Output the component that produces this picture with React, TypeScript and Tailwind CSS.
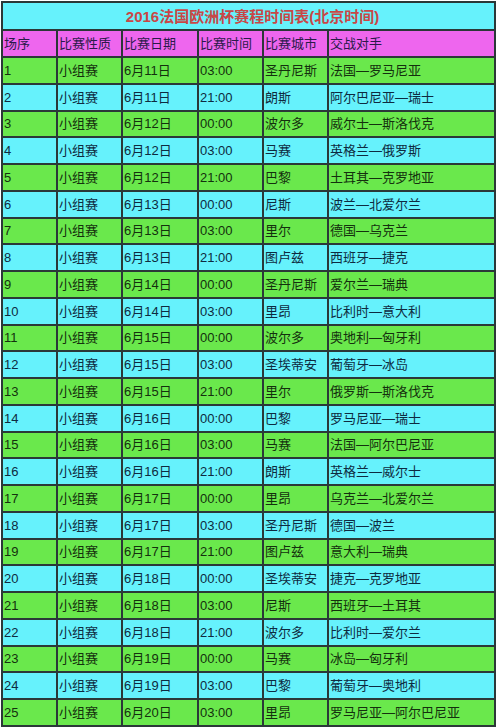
import React from "react";

const rows: string[][] = [
  ["1", "小组赛", "6月11日", "03:00", "圣丹尼斯", "法国—罗马尼亚"],
  ["2", "小组赛", "6月11日", "21:00", "朗斯", "阿尔巴尼亚—瑞士"],
  ["3", "小组赛", "6月12日", "00:00", "波尔多", "威尔士—斯洛伐克"],
  ["4", "小组赛", "6月12日", "03:00", "马赛", "英格兰—俄罗斯"],
  ["5", "小组赛", "6月12日", "21:00", "巴黎", "土耳其—克罗地亚"],
  ["6", "小组赛", "6月13日", "00:00", "尼斯", "波兰—北爱尔兰"],
  ["7", "小组赛", "6月13日", "03:00", "里尔", "德国—乌克兰"],
  ["8", "小组赛", "6月13日", "21:00", "图卢兹", "西班牙—捷克"],
  ["9", "小组赛", "6月14日", "00:00", "圣丹尼斯", "爱尔兰—瑞典"],
  ["10", "小组赛", "6月14日", "03:00", "里昂", "比利时—意大利"],
  ["11", "小组赛", "6月15日", "00:00", "波尔多", "奥地利—匈牙利"],
  ["12", "小组赛", "6月15日", "03:00", "圣埃蒂安", "葡萄牙—冰岛"],
  ["13", "小组赛", "6月15日", "21:00", "里尔", "俄罗斯—斯洛伐克"],
  ["14", "小组赛", "6月16日", "00:00", "巴黎", "罗马尼亚—瑞士"],
  ["15", "小组赛", "6月16日", "03:00", "马赛", "法国—阿尔巴尼亚"],
  ["16", "小组赛", "6月16日", "21:00", "朗斯", "英格兰—威尔士"],
  ["17", "小组赛", "6月17日", "00:00", "里昂", "乌克兰—北爱尔兰"],
  ["18", "小组赛", "6月17日", "03:00", "圣丹尼斯", "德国—波兰"],
  ["19", "小组赛", "6月17日", "21:00", "图卢兹", "意大利—瑞典"],
  ["20", "小组赛", "6月18日", "00:00", "圣埃蒂安", "捷克—克罗地亚"],
  ["21", "小组赛", "6月18日", "03:00", "尼斯", "西班牙—土耳其"],
  ["22", "小组赛", "6月18日", "21:00", "波尔多", "比利时—爱尔兰"],
  ["23", "小组赛", "6月19日", "00:00", "马赛", "冰岛—匈牙利"],
  ["24", "小组赛", "6月19日", "03:00", "巴黎", "葡萄牙—奥地利"],
  ["25", "小组赛", "6月20日", "03:00", "里昂", "罗马尼亚—阿尔巴尼亚"],
];

const headers = ["场序", "比赛性质", "比赛日期", "比赛时间", "比赛城市", "交战对手"];

export default function App() {
  return (
    <div className="w-[500px] h-[728px] overflow-hidden bg-white pt-[1px]" style={{ fontFamily: '"Liberation Sans", "Noto Sans CJK SC", sans-serif' }}>
      <div className="ml-[1px] w-[495px] grid grid-cols-[53px_63px_74px_63px_63px_165px] gap-[2px] p-[2px] bg-[#2b3838] text-[13px] text-[#1a2233] leading-none">
        <div className="col-span-6 h-[26px] bg-[#66f2fc] flex items-center justify-center pl-[8px] text-[15px] font-bold text-[#c94646]">
          2016法国欧洲杯赛程时间表(北京时间)
        </div>
        {headers.map((h) => (
          <div key={h} className="h-[25px] bg-[#ee66ee] flex items-center pl-[1px] text-[#2a1a4a]">
            {h}
          </div>
        ))}
        {rows.map((r, i) =>
          r.map((c, j) => (
            <div
              key={i + "-" + j}
              className={
                "h-[24.75px] flex items-center pl-[1px] whitespace-nowrap " +
                (i % 2 === 0 ? "bg-[#6ae84c] text-[#14300e]" : "bg-[#66f2fc] text-[#0e2a40]")
              }
            >
              {c}
            </div>
          ))
        )}
      </div>
    </div>
  );
}
